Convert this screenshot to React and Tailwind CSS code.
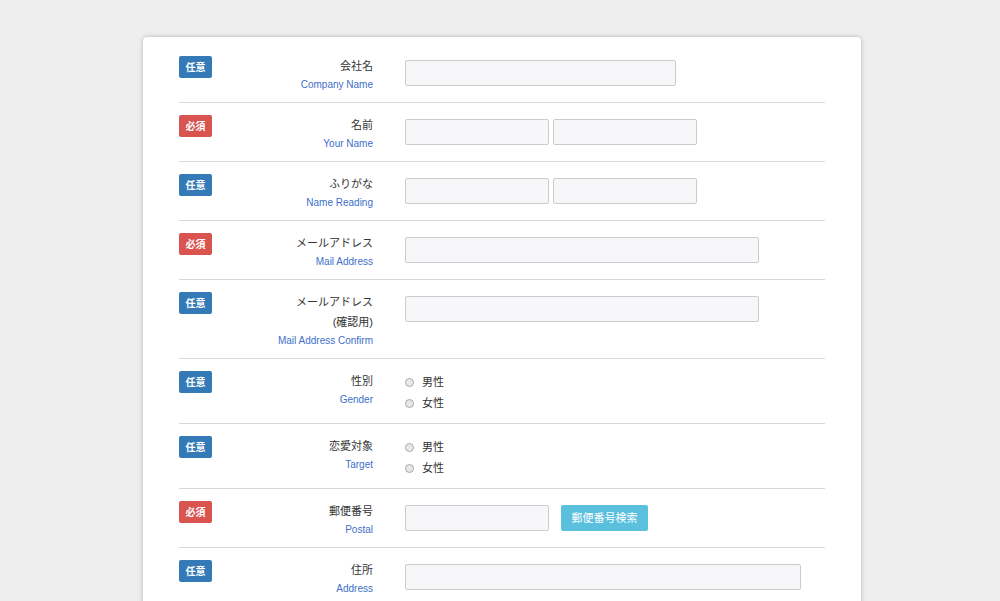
const F = { fontFamily: '"Liberation Sans","Noto Sans CJK JP",sans-serif' };

function Badge({ req }) {
  return (
    <div className={`w-[33px] h-[22px] rounded-[2px] text-white text-[10px] font-bold flex items-center justify-center shrink-0 ${req ? 'bg-[#d9534f]' : 'bg-[#337ab7]'}`}>
      {req ? '必須' : '任意'}
    </div>
  );
}

const Input = ({ w }) => (
  <div className={`h-[26px] border border-[#ccc] bg-[#f7f7f9] rounded-[2px] ${w}`} />
);

function Radios() {
  return (
    <div className="flex flex-col">
      {['男性', '女性'].map((t) => (
        <div key={t} className="flex items-center h-[21px] text-[11px] text-[#333]">
          <span className="w-[9px] h-[9px] rounded-full border border-[#aaa] bg-[#e8e8e8] mr-[8px]" />
          {t}
        </div>
      ))}
    </div>
  );
}

function Row({ req, jp, en, children, last }) {
  return (
    <div className={`flex pt-3 pb-[9px] ${last ? '' : 'border-b border-[#d8d8dc]'}`}>
      <Badge req={req} />
      <div className="w-[161px] text-right shrink-0">
        {jp.map((j) => (
          <div key={j} className="text-[11px] text-[#333] leading-[20px]">{j}</div>
        ))}
        <div className="text-[10px] text-[#3d6fc9] leading-[17px]">{en}</div>
      </div>
      <div className="ml-8 flex gap-1 items-start pt-1">{children}</div>
    </div>
  );
}

export default function App() {
  return (
    <div style={F} className="w-[1000px] h-[601px] overflow-hidden bg-[#eeeeef] pt-[37px]">
      <div className="ml-[143px] w-[718px] h-[600px] bg-white rounded-[4px] shadow-[0_0_4px_rgba(0,0,0,0.25)] px-9 pt-[7px]">
        <Row jp={['会社名']} en="Company Name"><Input w="w-[271px]" /></Row>
        <Row req jp={['名前']} en="Your Name"><Input w="w-[144px]" /><Input w="w-[144px]" /></Row>
        <Row jp={['ふりがな']} en="Name Reading"><Input w="w-[144px]" /><Input w="w-[144px]" /></Row>
        <Row req jp={['メールアドレス']} en="Mail Address"><Input w="w-[354px]" /></Row>
        <Row jp={['メールアドレス', '(確認用)']} en="Mail Address Confirm"><Input w="w-[354px]" /></Row>
        <Row jp={['性別']} en="Gender"><div className="-mt-[3px]"><Radios /></div></Row>
        <Row jp={['恋愛対象']} en="Target"><div className="-mt-[3px]"><Radios /></div></Row>
        <Row req jp={['郵便番号']} en="Postal">
          <Input w="w-[144px]" />
          <div className="ml-[8px] w-[87px] h-[26px] bg-[#5bc0de] text-white text-[11px] flex items-center justify-center rounded-[2px]">郵便番号検索</div>
        </Row>
        <Row jp={['住所']} en="Address" last><Input w="w-[396px]" /></Row>
      </div>
    </div>
  );
}
